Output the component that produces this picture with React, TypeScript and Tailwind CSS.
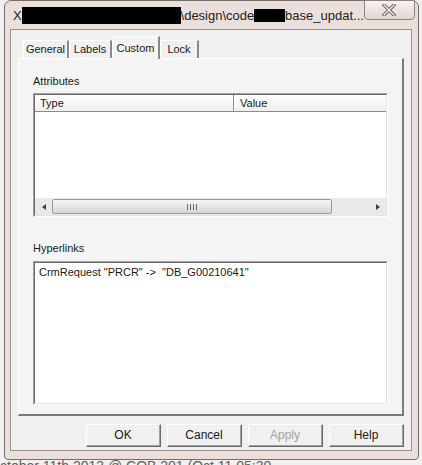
import React from "react";

const tabs = [
  { label: "General", w: "w-[46px]" },
  { label: "Labels", w: "w-[43px]" },
  { label: "Custom", w: "w-[48px]", active: true },
  { label: "Lock", w: "w-[39px]" },
];

const buttons = [
  { label: "OK" },
  { label: "Cancel" },
  { label: "Apply", disabled: true },
  { label: "Help" },
];

function Sunken({ className, children }: { className: string; children?: React.ReactNode }) {
  return (
    <div className={`border border-t-[#a0a0a0] border-l-[#a0a0a0] border-b-white border-r-white ${className}`}>
      <div className="h-full border border-t-[#696969] border-l-[#696969] border-b-[#e3e3e3] border-r-[#e3e3e3] bg-white flex flex-col">
        {children}
      </div>
    </div>
  );
}

function CloseGlyph() {
  return (
    <svg width="14" height="12" viewBox="0 0 14 12">
      <path d="M2 1 L12 11 M12 1 L2 11" stroke="#5d5856" strokeWidth="3.2" strokeLinecap="square" />
      <path d="M2 1 L12 11 M12 1 L2 11" stroke="#f7f3f2" strokeWidth="1.4" strokeLinecap="square" />
    </svg>
  );
}

export default function App() {
  return (
    <div className="w-[422px] h-[465px] bg-[#f3f1f0] overflow-hidden flex flex-col font-['Liberation_Sans',Arial,sans-serif]">
      <div className="flex h-[460px]">
        <div className="w-[4px] shrink-0" />
        {/* window */}
        <div className="w-[415px] h-[460px] border border-[#766d6a] rounded-t-[7px] rounded-b-[4px] bg-[#ebdfdc] flex flex-col">
          {/* title bar */}
          <div className="h-[28px] flex items-center pl-[8px] shrink-0">
            <span className="text-[13px] text-[#1e1e1e] leading-none">X</span>
            <span className="w-[165px] h-[17px] bg-black mt-[1px]" />
            <span className="text-[13px] text-[#1e1e1e] leading-none">\design\code</span>
            <span className="w-[32px] h-[13px] bg-black" />
            <span className="text-[13px] text-[#1e1e1e] leading-none">base_updat...</span>
            <div className="ml-auto mr-[3px] self-start -mt-px w-[53px] h-[20px] rounded-b-[4px] border border-[#8e8380] bg-gradient-to-b from-[#f8f3f1] to-[#e2d6d3] flex items-center justify-center">
              <CloseGlyph />
            </div>
          </div>

          {/* client area */}
          <div className="ml-[5px] mr-[6px] mb-[8px] flex-1 border border-[#9b918e] bg-[#f0f0f0] flex flex-col pt-[6px] px-[7px] text-[11px] text-[#1a1a1a]">
            {/* tabs */}
            <div className="h-[22px] flex items-end pl-[5px]">
              {tabs.map((t) =>
                t.active ? (
                  <div
                    key={t.label}
                    className={`${t.w} h-[23px] -mb-px relative z-10 bg-[#f4f4f4] border-l border-t border-l-white border-t-white border-r-2 border-r-[#8a8a8a] flex items-start justify-center pt-[3px]`}
                  >
                    {t.label}
                  </div>
                ) : (
                  <div
                    key={t.label}
                    className={`${t.w} h-[18px] border-l border-t border-l-white border-t-white border-r-2 border-r-[#8a8a8a] flex items-center justify-center`}
                  >
                    {t.label}
                  </div>
                )
              )}
            </div>

            {/* panel */}
            <div className="h-[358px] bg-[#f4f4f4] border-l border-t border-l-white border-t-white border-r-2 border-b-2 border-r-[#7a7a7a] border-b-[#7a7a7a] flex flex-col px-[14px]">
              <div className="mt-[14px] h-[16px] leading-[16px]">Attributes</div>
              <Sunken className="mt-[4px] h-[124px]">
                <div className="h-[17px] flex border-b border-[#8c8c8c] bg-gradient-to-b from-white to-[#efefef] shrink-0">
                  <div className="w-[199px] border-r border-[#8c8c8c] pl-[5px] leading-[16px]">Type</div>
                  <div className="flex-1 border-l border-white pl-[5px] leading-[16px]">Value</div>
                </div>
                <div className="flex-1" />
                <div className="h-[17px] bg-[#e9e9e9] flex items-center shrink-0">
                  <div className="w-[17px] h-full flex items-center justify-center">
                    <div className="w-0 h-0 border-y-[3.5px] border-y-transparent border-r-[4px] border-r-[#404040]" />
                  </div>
                  <div className="w-[280px] h-[15px] rounded-[2px] border border-[#9c9c9c] bg-gradient-to-b from-[#f6f6f6] via-[#e4e4e4] to-[#d4d4d4] flex items-center justify-center gap-[2px]">
                    <div className="w-px h-[6px] bg-[#6a6a6a]" />
                    <div className="w-px h-[6px] bg-[#6a6a6a]" />
                    <div className="w-px h-[6px] bg-[#6a6a6a]" />
                    <div className="w-px h-[6px] bg-[#6a6a6a]" />
                  </div>
                  <div className="flex-1" />
                  <div className="w-[17px] h-full flex items-center justify-center">
                    <div className="w-0 h-0 border-y-[3.5px] border-y-transparent border-l-[4px] border-l-[#404040]" />
                  </div>
                </div>
              </Sunken>

              <div className="mt-[23px] h-[16px] leading-[16px]">Hyperlinks</div>
              <Sunken className="mt-[5px] h-[144px]">
                <div className="pl-[4px] pt-[2px] leading-[15px] whitespace-pre">CrmRequest "PRCR" -&gt;  "DB_G00210641"</div>
              </Sunken>
            </div>

            {/* buttons */}
            <div className="mt-[8px] flex justify-end gap-[6px]">
              {buttons.map((b) => (
                <div
                  key={b.label}
                  className="w-[75px] h-[23px] border border-t-white border-l-white border-b-[#696969] border-r-[#696969] bg-[#f0f0f0]"
                >
                  <div
                    className={`h-full border-b border-r border-b-[#a0a0a0] border-r-[#a0a0a0] flex items-center justify-center text-[12px] ${
                      b.disabled ? "text-[#a3a3a3]" : "text-[#1a1a1a]"
                    }`}
                  >
                    {b.label}
                  </div>
                </div>
              ))}
            </div>
          </div>
        </div>
      </div>

      {/* desktop text behind the window, mostly hidden */}
      <div className="h-[5px] overflow-hidden">
        <div className="text-[14px] leading-[14px] text-[#5f5f5f] whitespace-nowrap -mt-[1px]">
          ctober 11th 2013 @ COB 201 (Oct 11 05:30
        </div>
      </div>
    </div>
  );
}
